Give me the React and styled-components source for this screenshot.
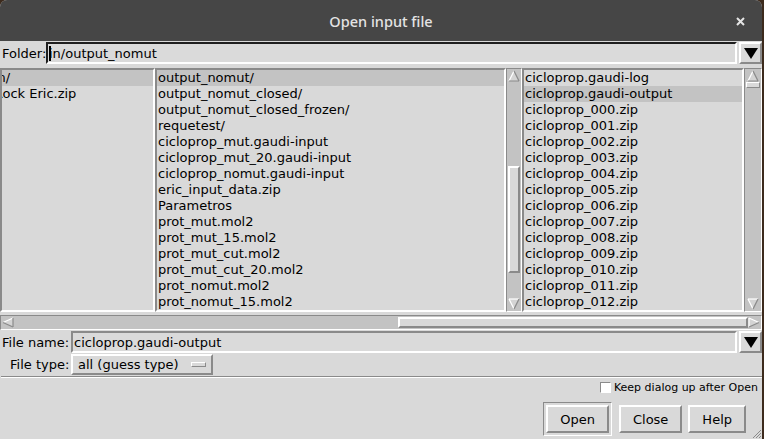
import React from 'react';
import styled, { createGlobalStyle, css } from 'styled-components';

const GlobalStyle = createGlobalStyle`
  html, body {
    margin: 0;
    padding: 0;
    background: #3d2b1d;
  }
  body {
    width: 764px;
    height: 439px;
    overflow: hidden;
    font-family: "DejaVu Sans", sans-serif;
    font-size: 13px;
    color: #000;
  }
`;

const raised = css`
  border-style: solid;
  border-color: #ffffff #8a8a8a #8a8a8a #ffffff;
`;

const sunken = css`
  border-style: solid;
  border-color: #8a8a8a #ffffff #ffffff #8a8a8a;
`;

const folderItems = [
  'output_nomut/',
  'output_nomut_closed/',
  'output_nomut_closed_frozen/',
  'requetest/',
  'cicloprop_mut.gaudi-input',
  'cicloprop_mut_20.gaudi-input',
  'cicloprop_nomut.gaudi-input',
  'eric_input_data.zip',
  'Parametros',
  'prot_mut.mol2',
  'prot_mut_15.mol2',
  'prot_mut_cut.mol2',
  'prot_mut_cut_20.mol2',
  'prot_nomut.mol2',
  'prot_nomut_15.mol2',
];

const fileItems = [
  'cicloprop.gaudi-log',
  'cicloprop.gaudi-output',
  ...Array.from({ length: 13 }, (_, i) => `cicloprop_${String(i).padStart(3, '0')}.zip`),
];

const Window = styled.div`
  position: relative;
  width: 762px;
  height: 439px;
  background: #d9d9d9;
  border-top-right-radius: 7px;
  border-top-left-radius: 7px;
  overflow: hidden;
  display: flex;
  flex-direction: column;
`;

const TitleBar = styled.div`
  position: relative;
  height: 41px;
  flex: none;
  background: #464646;
  display: flex;
  align-items: center;
  justify-content: center;
  color: #e4e4e4;
  font-family: "Noto Sans", "Open Sans", sans-serif;
  font-size: 14.5px;
  font-weight: 500;
`;

const CloseX = styled.svg`
  position: absolute;
  right: 17px;
  top: 17px;
`;

const FolderRow = styled.div`
  display: flex;
  align-items: center;
  height: 22px;
  margin-top: 1px;
`;

const Label = styled.div`
  flex: none;
  width: ${(p) => p.$w}px;
  padding-left: ${(p) => p.$pad || 2}px;
  box-sizing: border-box;
  white-space: nowrap;
  text-align: ${(p) => p.$align || 'left'};
`;

const Entry = styled.div`
  flex: 1;
  height: 22px;
  box-sizing: border-box;
  border-width: 2px;
  ${sunken};
  ${(p) => p.$focus && css`border-color: #1e1e1e #ffffff #ffffff #1e1e1e;`}
  background: #dadada;
  display: flex;
  align-items: center;
  padding-left: 1px;
  white-space: nowrap;
  overflow: hidden;
`;

const CaretText = styled.span`
  position: relative;
  &::before {
    content: '';
    position: absolute;
    left: 0;
    top: 0;
    width: 2px;
    height: 15px;
    background: #000;
  }
`;

const DropButton = styled.div`
  flex: none;
  width: 23px;
  height: 22px;
  margin-left: 2px;
  box-sizing: border-box;
  border-width: 2px;
  ${raised};
  display: flex;
  align-items: center;
  justify-content: center;
`;

const Panes = styled.div`
  display: flex;
  height: 244px;
  margin-top: 4px;
`;

const ListBox = styled.div`
  flex: ${(p) => (p.$w ? 'none' : '1')};
  width: ${(p) => (p.$w ? `${p.$w}px` : 'auto')};
  box-sizing: border-box;
  border-width: 2px;
  ${sunken};
  overflow: hidden;
`;

const Rows = styled.div`
  margin-left: ${(p) => -(p.$scroll || 0)}px;
`;

const Row = styled.div`
  height: 16px;
  line-height: 16px;
  padding-left: 1px;
  white-space: nowrap;
  background: ${(p) => (p.$sel ? '#c3c3c3' : 'transparent')};
`;

const VScroll = styled.div`
  flex: none;
  width: ${(p) => p.$w}px;
  box-sizing: border-box;
  border-width: 1px;
  ${sunken};
  padding: 1px;
  background: #c3c3c3;
  display: flex;
  flex-direction: column;
  align-items: stretch;
`;

const Trough = styled.div`
  flex: none;
  ${(p) => (p.$h !== undefined ? `height: ${p.$h}px;` : `width: ${p.$w}px;`)}
`;

const Thumb = styled.div`
  flex: none;
  box-sizing: border-box;
  ${(p) => (p.$h !== undefined ? `height: ${p.$h}px;` : `width: ${p.$w}px;`)}
  border-width: ${(p) => p.$b || 2}px;
  ${raised};
  background: #d9d9d9;
`;

const ArrowBox = styled.svg`
  flex: none;
  display: block;
`;

const HScroll = styled.div`
  height: 15px;
  margin-top: 3px;
  box-sizing: border-box;
  border-width: 1px;
  ${sunken};
  padding: 1px;
  background: #c3c3c3;
  display: flex;
`;

const Form = styled.div`
  display: grid;
  grid-template-columns: 71px 1fr auto;
  grid-template-rows: 22px 21px;
  row-gap: 1px;
  margin-top: 1px;
  align-items: center;
`;

const MenuButton = styled.div`
  width: 142px;
  height: 21px;
  box-sizing: border-box;
  border-width: 2px;
  ${raised};
  display: flex;
  align-items: center;
  justify-content: space-between;
  padding: 0 5px 0 5px;
`;

const Indicator = styled.div`
  width: 15px;
  height: 5px;
  box-sizing: border-box;
  border-width: 1px;
  ${raised};
`;

const Separator = styled.div`
  height: 1px;
  margin: 1px 0 0 1px;
  background: #8a8a8a;
  border-bottom: 1px solid #ffffff;
`;

const Bottom = styled.div`
  flex: 1;
  display: flex;
  flex-direction: column;
  align-items: flex-end;
  padding-right: 4px;
`;

const CheckRow = styled.label`
  display: flex;
  align-items: center;
  gap: 3px;
  margin-top: 4px;
  font-size: 11px;
  height: 11px;
`;

const CheckBox = styled.span`
  width: 11px;
  height: 11px;
  box-sizing: border-box;
  border-width: 1px;
  ${sunken};
  background: #ffffff;
`;

const ButtonRow = styled.div`
  display: flex;
  align-items: center;
  gap: 6px;
  margin-top: 9px;
  margin-right: 12px;
`;

const DefaultRing = styled.div`
  border-width: 1px;
  ${sunken};
  padding: 2px;
  margin-right: 1px;
`;

const Button = styled.div`
  height: 28px;
  box-sizing: border-box;
  border-width: 2px;
  ${raised};
  padding: 0 ${(p) => p.$pad || 12}px;
  display: flex;
  align-items: center;
  justify-content: center;
`;

const Grip = styled.svg`
  position: absolute;
  right: 0;
  bottom: 0;
`;

const UpArrow = ({ w = 12 }) => (
  <ArrowBox width={w} height="12" viewBox="0 0 12 12">
    <polygon points="6,1 11,11 1,11" fill="#d4d4d4" />
    <line x1="6" y1="1" x2="1" y2="11" stroke="#ffffff" strokeWidth="1.2" />
    <line x1="6" y1="1" x2="11" y2="11" stroke="#8a8a8a" strokeWidth="1.2" />
    <line x1="1" y1="11" x2="11" y2="11" stroke="#8a8a8a" strokeWidth="1.2" />
  </ArrowBox>
);

const DownArrow = ({ w = 12 }) => (
  <ArrowBox width={w} height="12" viewBox="0 0 12 12">
    <polygon points="1,1 11,1 6,11" fill="#d4d4d4" />
    <line x1="1" y1="1" x2="11" y2="1" stroke="#ffffff" strokeWidth="1.2" />
    <line x1="1" y1="1" x2="6" y2="11" stroke="#ffffff" strokeWidth="1.2" />
    <line x1="11" y1="1" x2="6" y2="11" stroke="#8a8a8a" strokeWidth="1.2" />
  </ArrowBox>
);

const LeftArrow = () => (
  <ArrowBox width="12" height="11" viewBox="0 0 12 11">
    <polygon points="1,5.5 11,1 11,10" fill="#d4d4d4" />
    <line x1="1" y1="5.5" x2="11" y2="1" stroke="#ffffff" strokeWidth="1.2" />
    <line x1="1" y1="5.5" x2="11" y2="10" stroke="#8a8a8a" strokeWidth="1.2" />
    <line x1="11" y1="1" x2="11" y2="10" stroke="#8a8a8a" strokeWidth="1.2" />
  </ArrowBox>
);

const RightArrow = () => (
  <ArrowBox width="12" height="11" viewBox="0 0 12 11">
    <polygon points="1,1 11,5.5 1,10" fill="#d4d4d4" />
    <line x1="1" y1="1" x2="1" y2="10" stroke="#ffffff" strokeWidth="1.2" />
    <line x1="1" y1="1" x2="11" y2="5.5" stroke="#ffffff" strokeWidth="1.2" />
    <line x1="1" y1="10" x2="11" y2="5.5" stroke="#8a8a8a" strokeWidth="1.2" />
  </ArrowBox>
);

const BlackDown = () => (
  <svg width="14" height="11" viewBox="0 0 14 11">
    <polygon points="0,0 14,0 7,11" fill="#000" />
  </svg>
);

const App = () => {
  return (
    <>
      <GlobalStyle />
      <Window>
        <TitleBar>
          Open input file
          <CloseX width="9" height="9" viewBox="0 0 9 9">
            <path d="M1 1 L8 8 M8 1 L1 8" stroke="#e4e4e4" strokeWidth="2" />
          </CloseX>
        </TitleBar>

        <FolderRow>
          <Label $w={46}>Folder:</Label>
          <Entry $focus>
            <CaretText>in/output_nomut</CaretText>
          </Entry>
          <DropButton>
            <BlackDown />
          </DropButton>
        </FolderRow>

        <Panes>
          <ListBox $w={155}>
            <Rows $scroll={9}>
              <Row $sel>in/</Row>
              <Row>Rock Eric.zip</Row>
            </Rows>
          </ListBox>
          <ListBox $w={351}>
            <Rows>
              {folderItems.map((name, i) => (
                <Row key={name} $sel={i === 0}>{name}</Row>
              ))}
            </Rows>
          </ListBox>
          <VScroll $w={16}>
            <UpArrow />
            <Trough $h={84} />
            <Thumb $h={107} />
            <Trough $h={25} />
            <DownArrow />
          </VScroll>
          <ListBox>
            <Rows>
              {fileItems.map((name, i) => (
                <Row key={name} $sel={i === 1}>{name}</Row>
              ))}
            </Rows>
          </ListBox>
          <VScroll $w={18}>
            <UpArrow w={14} />
            <Thumb $h={6} $b={1} />
            <Trough $h={210} />
            <DownArrow w={14} />
          </VScroll>
        </Panes>

        <HScroll>
          <LeftArrow />
          <Trough $w={384} />
          <Thumb $w={350} />
          <RightArrow />
        </HScroll>

        <Form>
          <Label $w={71}>File name:</Label>
          <Entry>cicloprop.gaudi-output</Entry>
          <DropButton>
            <BlackDown />
          </DropButton>
          <Label $w={71} $pad={10}>File type:</Label>
          <div>
            <MenuButton>
              all (guess type)
              <Indicator />
            </MenuButton>
          </div>
          <div />
        </Form>

        <Separator />

        <Bottom>
          <CheckRow>
            <CheckBox />
            Keep dialog up after Open
          </CheckRow>
          <ButtonRow>
            <DefaultRing>
              <Button $pad={12}>Open</Button>
            </DefaultRing>
            <Button $pad={12}>Close</Button>
            <Button $pad={12}>Help</Button>
          </ButtonRow>
        </Bottom>

        <Grip width="12" height="12" viewBox="0 0 12 12">
          <path d="M11 3 L3 11 M11 6 L6 11 M11 9 L9 11" stroke="#8a8a8a" strokeWidth="1" />
        </Grip>
      </Window>
    </>
  );
};

export default App;
